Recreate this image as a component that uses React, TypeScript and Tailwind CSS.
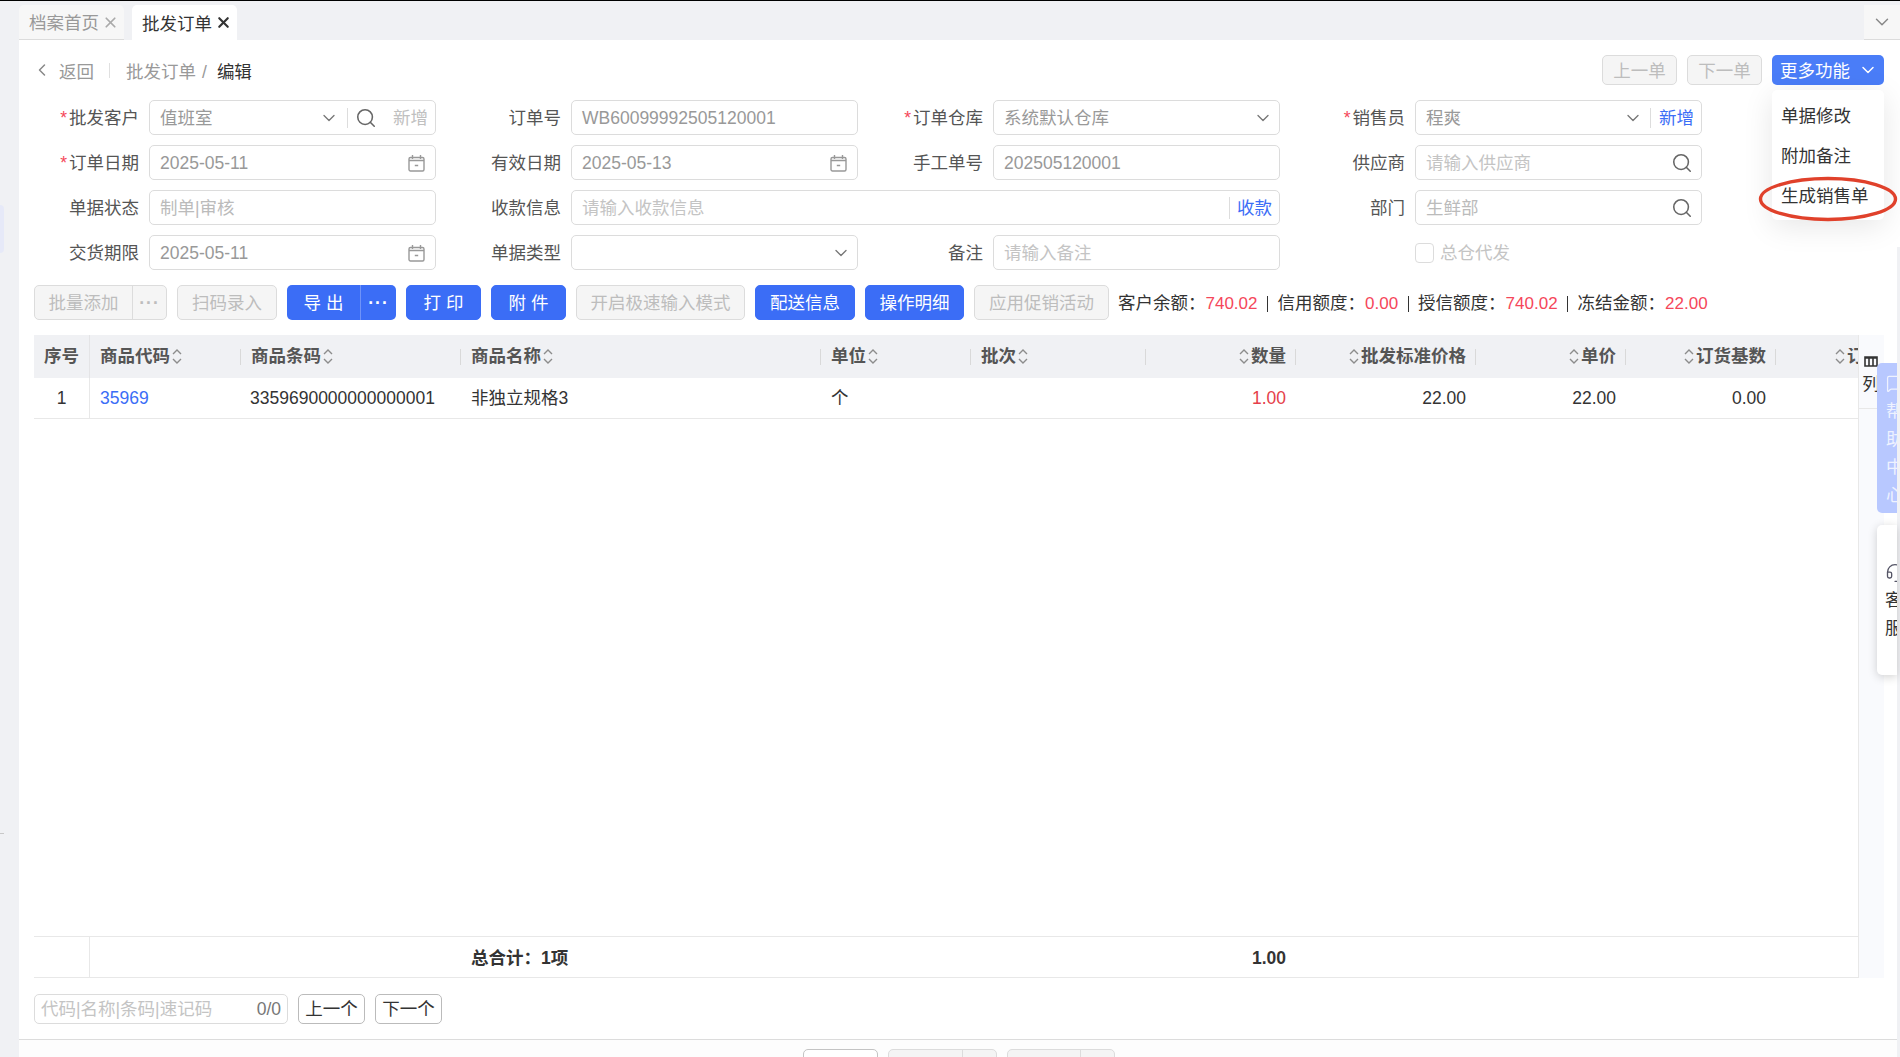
import { ChevronDown, ChevronLeft, Headset, MessageSquare, Search, X } from 'lucide-react'
import type { ReactNode } from 'react'

const columns =
  'grid grid-cols-[56px_150px_220px_360px_150px_175px_150px_180px_150px_150px_83px]'

function Calendar() {
  return (
    <svg className="mr-[10px] shrink-0 text-[#999]" fill="none" height="18" stroke="currentColor" strokeWidth="1.4" viewBox="0 0 17 18" width="17">
      <rect height="13.5" rx="1.5" width="15" x="1" y="3.5" />
      <path d="M4.5 1v4M12.5 1v4M1 6.5h15M6.8 11.5h3.4" />
    </svg>
  )
}

function SortIcon() {
  return (
    <svg className="mx-[2px] shrink-0 text-[#8c8c8c]" fill="none" height="17" stroke="currentColor" strokeWidth="1.4" viewBox="0 0 10 17" width="10">
      <path d="M1 6l4-4 4 4M1 11l4 4 4-4" />
    </svg>
  )
}

function Field({
  label,
  required,
  wide,
  labelWidth,
  children
}: {
  label: string
  required?: boolean
  wide?: boolean
  labelWidth: string
  children: ReactNode
}) {
  return (
    <div className={`flex h-[35px] items-center gap-[10px] ${wide ? 'col-span-2' : ''}`}>
      <div className={`${labelWidth} shrink-0 pt-[2px] text-right text-[#555]`}>
        {required && <span className="mr-[2px] text-[#f5475a]">*</span>}
        {label}
      </div>
      <div className="flex h-full min-w-0 flex-1 items-center rounded-[5px] border border-[#dcdcdc] bg-white pl-[10px] [&>span]:pt-[2px]">
        {children}
      </div>
    </div>
  )
}

function Btn({ children, primary, className = '' }: { children: ReactNode; primary?: boolean; className?: string }) {
  return (
    <div
      className={`flex items-center justify-center rounded-[5px] border pt-[2px] ${
        primary
          ? 'border-[#3b6df6] bg-[#3b6df6] text-white'
          : 'border-[#dcdcdc] bg-[#f5f5f5] text-[#bdbdbd]'
      } ${className}`}
    >
      {children}
    </div>
  )
}

function HeadCell({ text, right }: { text: string; right?: boolean }) {
  return (
    <div className="flex items-center">
      <div
        className={`flex h-[16px] w-full items-center whitespace-nowrap border-l border-[#d9d9d9] ${
          right ? 'justify-end pr-[9px]' : 'pl-[10px]'
        }`}
      >
        {right && <SortIcon />}
        {text}
        {!right && <SortIcon />}
      </div>
    </div>
  )
}

function Stat({ label, value, last }: { label: string; value: string; last?: boolean }) {
  return (
    <>
      <span className="text-[#333]">{label}：</span>
      <span className="text-[17px] text-[#f5475a]">{value}</span>
      {!last && <span className="mx-[9.5px] h-[16px] w-[1px] bg-[#333]" />}
    </>
  )
}

export default function App() {
  return (
    <div className="relative flex h-[1057px] w-[1900px] flex-col overflow-hidden bg-[#f0f1f4] text-[17.5px] leading-none [font-family:'Liberation_Sans','Noto_Sans_CJK_SC',sans-serif]">
      <div className="h-[1px] bg-black" />

      {/* tabs */}
      <div className="flex h-[39px] items-end justify-between pl-[19px]">
        <div className="flex gap-[8px]">
          <div className="flex h-[35px] w-[105px] items-center gap-[3px] rounded-t-[5px] border-b border-[#dcdcdc] bg-[#f7f7f7] pl-[10px] text-[#999]">
            <span className="pt-[4px]">档案首页</span>
            <X size={17} strokeWidth={2.4} className="text-[#aaa]" />
          </div>
          <div className="flex h-[35px] w-[105px] items-center gap-[3px] rounded-t-[5px] bg-white pl-[10px] text-[#333]">
            <span className="pt-[4px]">批发订单</span>
            <X size={17} strokeWidth={3} className="text-[#333]" />
          </div>
        </div>
        <div className="flex h-[35px] w-[36px] items-center justify-center border-b border-[#dcdcdc] bg-[#f7f7f7] text-[#888]">
          <ChevronDown size={22} strokeWidth={1.6} />
        </div>
      </div>

      <div className="flex min-h-0 flex-1">
        <div className="w-[19px] shrink-0" />

        <main className="flex min-w-0 flex-1 flex-col bg-white">
          <div className="flex flex-1 flex-col pl-[15px] pr-[13px] pt-[15px]">
            {/* breadcrumb */}
            <div className="flex h-[30px] items-center">
              <ChevronLeft size={20} strokeWidth={1.8} className="ml-[-2px] text-[#888]" />
              <span className="ml-[7px] pt-[5px] text-[#999]">返回</span>
              <span className="ml-[15px] h-[15px] w-[1px] bg-[#e0e0e0]" />
              <span className="ml-[16px] pt-[5px] text-[#999]">批发订单</span>
              <span className="ml-[6px] pt-[5px] text-[#999]">/</span>
              <span className="ml-[10px] pt-[5px] text-[#333]">编辑</span>
              <div className="ml-auto flex gap-[10px]">
                <Btn className="h-[30px] w-[75px] pt-[4px]">上一单</Btn>
                <Btn className="h-[30px] w-[75px] pt-[4px]">下一单</Btn>
                <div className="flex h-[30px] w-[112px] items-center rounded-[5px] bg-[#4a7df8] pl-[8px] text-white">
                  <span className="pt-[4px]">更多功能</span>
                  <ChevronDown size={20} strokeWidth={1.8} className="ml-[8px]" />
                </div>
              </div>
            </div>

            {/* form */}
            <div className="mt-[15px] grid grid-cols-[402px_422px_422px_422px] gap-y-[10px]">
              <Field label="批发客户" labelWidth="w-[105px]" required>
                <span className="flex-1 text-[#999]">值班室</span>
                <ChevronDown size={20} strokeWidth={1.6} className="text-[#777]" />
                <span className="ml-[8px] h-[20px] w-[1px] bg-[#ddd]" />
                <Search size={22} strokeWidth={1.7} className="ml-[7px] text-[#666]" />
                <span className="ml-[16px] mr-[7px] text-[#c0c0c0]">新增</span>
              </Field>
              <Field label="订单号" labelWidth="w-[125px]">
                <span className="text-[#999]">WB60099992505120001</span>
              </Field>
              <Field label="订单仓库" labelWidth="w-[125px]" required>
                <span className="flex-1 text-[#999]">系统默认仓库</span>
                <ChevronDown size={20} strokeWidth={1.6} className="mr-[6px] text-[#777]" />
              </Field>
              <Field label="销售员" labelWidth="w-[125px]" required>
                <span className="flex-1 text-[#999]">程爽</span>
                <ChevronDown size={20} strokeWidth={1.6} className="text-[#777]" />
                <span className="ml-[7px] h-[20px] w-[1px] bg-[#ddd]" />
                <span className="ml-[8px] mr-[7px] text-[#3b6df6]">新增</span>
              </Field>

              <Field label="订单日期" labelWidth="w-[105px]" required>
                <span className="flex-1 text-[#999]">2025-05-11</span>
                <Calendar />
              </Field>
              <Field label="有效日期" labelWidth="w-[125px]">
                <span className="flex-1 text-[#999]">2025-05-13</span>
                <Calendar />
              </Field>
              <Field label="手工单号" labelWidth="w-[125px]">
                <span className="text-[#999]">202505120001</span>
              </Field>
              <Field label="供应商" labelWidth="w-[125px]">
                <span className="flex-1 text-[#c4c4c4]">请输入供应商</span>
                <Search size={22} strokeWidth={1.7} className="mr-[8px] text-[#666]" />
              </Field>

              <Field label="单据状态" labelWidth="w-[105px]">
                <span className="text-[#bbb]">制单|审核</span>
              </Field>
              <Field label="收款信息" labelWidth="w-[125px]" wide>
                <span className="flex-1 text-[#c4c4c4]">请输入收款信息</span>
                <span className="h-[22px] w-[1px] bg-[#ddd]" />
                <span className="ml-[7px] mr-[7px] text-[#3b6df6]">收款</span>
              </Field>
              <Field label="部门" labelWidth="w-[125px]">
                <span className="flex-1 text-[#bbb]">生鲜部</span>
                <Search size={22} strokeWidth={1.7} className="mr-[8px] text-[#666]" />
              </Field>

              <Field label="交货期限" labelWidth="w-[105px]">
                <span className="flex-1 text-[#999]">2025-05-11</span>
                <Calendar />
              </Field>
              <Field label="单据类型" labelWidth="w-[125px]">
                <span className="flex-1" />
                <ChevronDown size={20} strokeWidth={1.6} className="mr-[6px] text-[#777]" />
              </Field>
              <Field label="备注" labelWidth="w-[125px]">
                <span className="text-[#c4c4c4]">请输入备注</span>
              </Field>
              <div className="flex h-[35px] items-center pl-[135px]">
                <span className="h-[20px] w-[19px] rounded-[4px] border border-[#dcdcdc] bg-white" />
                <span className="ml-[6px] pt-[2px] text-[#c4c4c4]">总仓代发</span>
              </div>
            </div>

            {/* toolbar */}
            <div className="mt-[15px] flex h-[35px] items-center">
              <div className="flex h-full w-[133px] rounded-[5px] border border-[#dcdcdc] bg-[#f5f5f5] text-[#bdbdbd]">
                <span className="flex w-[98px] items-center justify-center border-r border-[#dcdcdc] pt-[2px]">批量添加</span>
                <span className="flex flex-1 items-center justify-center pt-[2px] font-bold tracking-[1px]">···</span>
              </div>
              <Btn className="ml-[10px] h-full w-[100px]">扫码录入</Btn>
              <div className="ml-[10px] flex h-full w-[109px] rounded-[5px] bg-[#3b6df6] text-white">
                <span className="flex w-[74px] items-center justify-center border-r border-[#6f93f8] pt-[2px]">导 出</span>
                <span className="flex flex-1 items-center justify-center pt-[2px] font-bold tracking-[1px]">···</span>
              </div>
              <Btn primary className="ml-[10px] h-full w-[75px]">打 印</Btn>
              <Btn primary className="ml-[10px] h-full w-[75px]">附 件</Btn>
              <Btn className="ml-[10px] h-full w-[169px]">开启极速输入模式</Btn>
              <Btn primary className="ml-[10px] h-full w-[100px]">配送信息</Btn>
              <Btn primary className="ml-[10px] h-full w-[99px]">操作明细</Btn>
              <Btn className="ml-[10px] h-full w-[135px]">应用促销活动</Btn>
              <div className="ml-[9px] flex items-center whitespace-nowrap pt-[2px]">
                <Stat label="客户余额" value="740.02" />
                <Stat label="信用额度" value="0.00" />
                <Stat label="授信额度" value="740.02" />
                <Stat label="冻结金额" value="22.00" last />
              </div>
            </div>

            {/* table */}
            <div className="mt-[15px] flex min-h-0 flex-1">
              <div className="flex w-[1825px] flex-col overflow-hidden border-r border-[#e8e8e8]">
                <div className={`${columns} h-[43px] shrink-0 bg-[#f0f1f4] font-bold text-[#555]`}>
                  <div className="flex items-center justify-center border-r border-[#e4e4e6] pt-[1px]">序号</div>
                  <div className="flex items-center pl-[10px]">
                    商品代码
                    <SortIcon />
                  </div>
                  <HeadCell text="商品条码" />
                  <HeadCell text="商品名称" />
                  <HeadCell text="单位" />
                  <HeadCell text="批次" />
                  <HeadCell text="数量" right />
                  <HeadCell text="批发标准价格" right />
                  <HeadCell text="单价" right />
                  <HeadCell text="订货基数" right />
                  <div className="flex items-center overflow-hidden">
                    <div className="flex h-[16px] w-full items-center justify-end whitespace-nowrap border-l border-[#d9d9d9]">
                      <SortIcon />
                      <span className="mr-[-9px] w-[20px] overflow-hidden">订货</span>
                    </div>
                  </div>
                </div>
                <div className={`${columns} h-[41px] shrink-0 items-stretch border-b border-[#e8e8e8] text-[#333]`}>
                  <div className="flex items-center justify-center border-r border-[#e8e8e8] pt-[2px]">1</div>
                  <div className="flex items-center pl-[10px] pt-[2px] text-[#3b6df6]">35969</div>
                  <div className="flex items-center pl-[10px] pt-[2px]">3359690000000000001</div>
                  <div className="flex items-center pl-[11px] pt-[2px]">非独立规格3</div>
                  <div className="flex items-center pl-[11px] pt-[2px]">个</div>
                  <div />
                  <div className="flex items-center justify-end pr-[9px] pt-[2px] text-[#e5404a]">1.00</div>
                  <div className="flex items-center justify-end pr-[9px] pt-[2px]">22.00</div>
                  <div className="flex items-center justify-end pr-[9px] pt-[2px]">22.00</div>
                  <div className="flex items-center justify-end pr-[9px] pt-[2px]">0.00</div>
                  <div />
                </div>
                <div className="flex-1" />
                <div className={`${columns} h-[42px] shrink-0 border-y border-[#e8e8e8] font-bold text-[#333]`}>
                  <div className="border-r border-[#e8e8e8]" />
                  <div />
                  <div />
                  <div className="flex items-center whitespace-nowrap pl-[11px] pt-[4px]">总合计：1项</div>
                  <div />
                  <div />
                  <div className="flex items-center justify-end pr-[9px] pt-[4px]">1.00</div>
                </div>
              </div>
              <div className="w-[25px] shrink-0 bg-[#f9fafd]">
                <div className="flex h-[74px] flex-col items-center border-b border-[#e8e8e8] pr-[1px] pt-[21px] text-[#333]">
                  <svg fill="none" height="11" stroke="#333" strokeWidth="1.6" viewBox="0 0 14 11" width="14">
                    <path d="M1 1h12v9H1zM5 1v9M9 1v9M1 2h12" />
                  </svg>
                  <span className="mt-[9px]">列</span>
                </div>
              </div>
            </div>

            {/* search row */}
            <div className="mt-[16px] flex h-[30px] gap-[10px]">
              <div className="flex w-[254px] items-center rounded-[5px] border border-[#dcdcdc] pl-[6px] pr-[6px] pt-[1px]">
                <span className="flex-1 text-[#c4c4c4]">代码|名称|条码|速记码</span>
                <span className="text-[#777]">0/0</span>
              </div>
              <div className="flex w-[67px] items-center justify-center rounded-[5px] border border-[#bbb] pt-[1px] text-[#333]">上一个</div>
              <div className="flex w-[67px] items-center justify-center rounded-[5px] border border-[#bbb] pt-[1px] text-[#333]">下一个</div>
            </div>
            <div className="h-[15px]" />
          </div>

          {/* bottom buttons, cut by the window */}
          <div className="flex h-[18px] shrink-0 gap-[10px] overflow-hidden border-t border-[#dcdcdc] bg-[#fdfdfd] pl-[784px] pt-[9px]">
            <div className="h-[40px] w-[75px] rounded-[5px] border border-[#c4c4c4] bg-white" />
            <div className="flex h-[40px] w-[109px] rounded-[5px] border border-[#dcdcdc] bg-[#f4f4f4]">
              <div className="w-[74px] border-r border-[#dcdcdc]" />
            </div>
            <div className="flex h-[40px] w-[108px] rounded-[5px] border border-[#dcdcdc] bg-[#f4f4f4]">
              <div className="w-[73px] border-r border-[#dcdcdc]" />
            </div>
          </div>
        </main>

        <div className="flex w-[3px] shrink-0 flex-col">
          <div className="h-[207px] bg-white" />
          <div className="flex-1 bg-[#f0f1f4]" />
        </div>
      </div>

      {/* left edge marks */}
      <div className="absolute left-0 top-[205px] h-[48px] w-[4px] rounded-r-[4px] bg-[#e6e9f8]" />
      <div className="absolute left-0 top-[833px] h-[1px] w-[4px] bg-[#c8c8c8]" />

      {/* more menu */}
      <div className="absolute left-[1772px] top-[90px] flex h-[130px] w-[112px] flex-col gap-[13px] rounded-[5px] bg-white pl-[9px] pt-[13px] text-[#333] shadow-[0_6px_30px_rgba(0,0,0,0.1)]">
        <div className="flex h-[27px] items-center">单据修改</div>
        <div className="flex h-[27px] items-center">附加备注</div>
        <div className="flex h-[27px] items-center">生成销售单</div>
      </div>
      <svg className="absolute left-[1758px] top-[176px]" fill="none" height="46" viewBox="0 0 140 46" width="140">
        <ellipse cx="70" cy="23" rx="67.5" ry="20.5" stroke="#e0412b" strokeWidth="3.4" />
      </svg>

      {/* floating side tabs */}
      <div className="absolute left-[1877px] top-[363px] h-[150px] w-[20px] overflow-hidden rounded-l-[5px] bg-[#b8c8ff] pl-[9px] pt-[11px] text-[#eef2ff]">
        <MessageSquare size={19} strokeWidth={1.6} />
        <div className="mt-[4px] w-[18px] leading-[28px]">帮助中心</div>
      </div>
      <div className="absolute left-[1877px] top-[525px] h-[150px] w-[20px] overflow-hidden rounded-l-[5px] bg-white pl-[8px] pt-[38px] text-[#333] shadow-[0_2px_10px_rgba(0,0,0,0.18)]">
        <Headset size={20} strokeWidth={1.6} className="text-[#556]" />
        <div className="mt-[3px] w-[18px] leading-[28px]">客服</div>
      </div>
    </div>
  )
}
